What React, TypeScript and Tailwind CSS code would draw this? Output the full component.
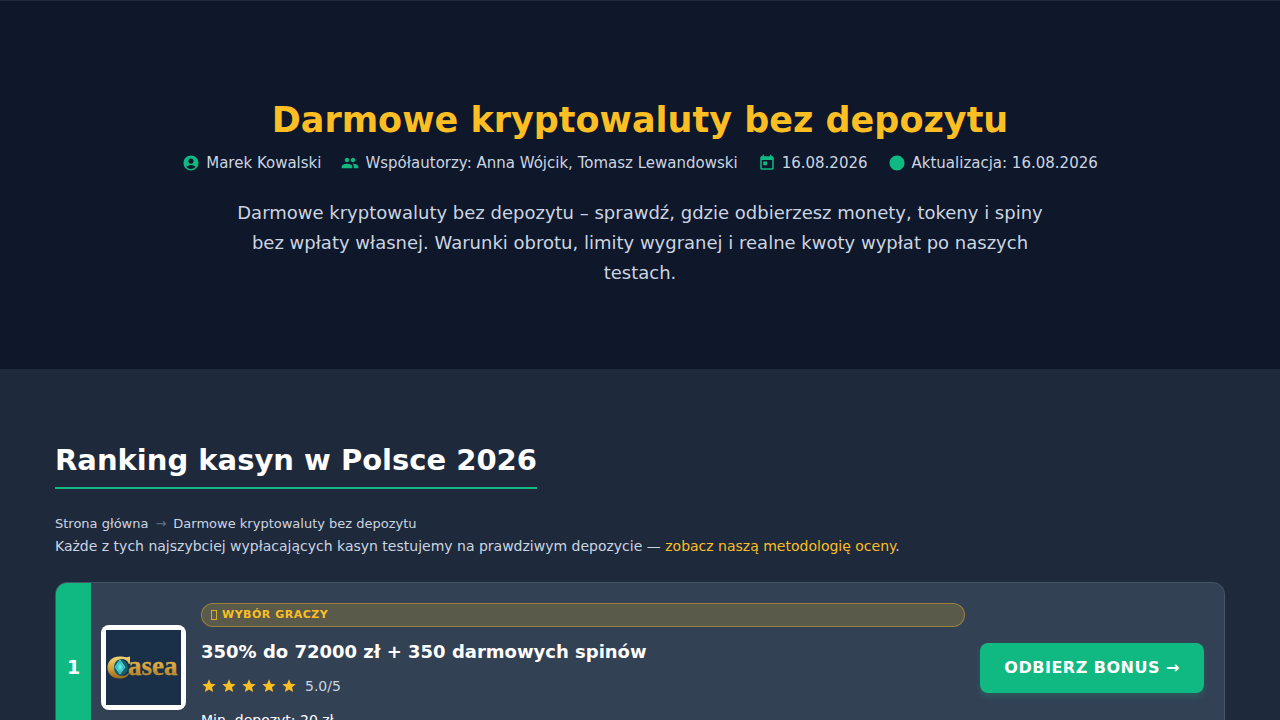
import type { ReactNode } from 'react';
import { MdAccountCircle, MdCircle, MdPeople, MdStar, MdToday } from 'react-icons/md';

interface MetaItemProps {
  icon: ReactNode;
  children: ReactNode;
}

function MetaItem({ icon, children }: MetaItemProps) {
  return (
    <span className="inline-flex items-center gap-[6px]">
      <span className="text-lg text-[#10b981]">{icon}</span>
      {children}
    </span>
  );
}

function Hero() {
  return (
    <header className="border-y border-[#1e293b] bg-[#0f172a] px-4 pt-[90px] pb-20 text-center">
      <h1 className="text-[35px] leading-[58px] font-bold text-[#fbbf24]">
        Darmowe kryptowaluty bez depozytu
      </h1>
      <div className="mt-[2px] flex flex-wrap justify-center gap-x-5 text-[15px] leading-6">
        <MetaItem icon={<MdAccountCircle />}>Marek Kowalski</MetaItem>
        <MetaItem icon={<MdPeople />}>Współautorzy: Anna Wójcik, Tomasz Lewandowski</MetaItem>
        <MetaItem icon={<MdToday />}>16.08.2026</MetaItem>
        <MetaItem icon={<MdCircle />}>Aktualizacja: 16.08.2026</MetaItem>
      </div>
      <p className="mx-auto mt-[23px] mb-px max-w-[820px] text-lg leading-[30px]">
        Darmowe kryptowaluty bez depozytu – sprawdź, gdzie odbierzesz monety, tokeny i spiny bez
        wpłaty własnej. Warunki obrotu, limity wygranej i realne kwoty wypłat po naszych testach.
      </p>
    </header>
  );
}

function CaseaLogo() {
  return (
    <svg viewBox="0 0 75 75" className="block w-full" role="img" aria-label="Casea">
      <defs>
        <linearGradient id="gold" x1="0" y1="0" x2="0" y2="1">
          <stop offset="0" stopColor="#f3d573" />
          <stop offset="0.5" stopColor="#d9a63f" />
          <stop offset="1" stopColor="#9a681c" />
        </linearGradient>
        <radialGradient id="gem">
          <stop offset="0" stopColor="#7ff5ef" />
          <stop offset="0.6" stopColor="#2cc5c8" />
          <stop offset="1" stopColor="#1a8790" />
        </radialGradient>
      </defs>
      <rect width="75" height="75" fill="#1a3048" />
      <circle cx="13.5" cy="37.5" r="8.5" fill="#14606c" />
      <path
        d="M24 26.500v7.500l-1.500-.5c-1-3-3.500-4.500-6.500-4.500-5 0-8 3.500-8 8.500 0 5.500 3.500 8.500 8 8.500 3 0 5-1 7.500-3.500-1.500 4-5 6-10 6-7 0-12-4.500-12-11 0-6.500 5-11 12-11 4 0 7 1.500 10.500 0z"
        fill="url(#gold)"
      />
      <path d="m14 30 5 7-5 7-5-7z" fill="url(#gem)" stroke="#83eae4" strokeWidth="0.7" />
      <text
        x="22"
        y="45"
        fill="url(#gold)"
        stroke="#d8a33f"
        strokeWidth="0.3"
        className="font-['Liberation_Serif',serif] text-[27px] font-bold"
      >
        asea
      </text>
    </svg>
  );
}

function CasinoCard() {
  return (
    <article className="mt-6 flex overflow-hidden rounded-xl border border-[#475569] bg-[#334155]">
      <div className="flex w-[35px] shrink-0 items-center justify-center bg-[#10b981] text-[19px] font-bold text-white">
        1
      </div>
      <div className="flex flex-1 items-center gap-[15px] py-5 pr-5 pl-[10px]">
        <div className="w-[85px] shrink-0 rounded-lg bg-white p-[5px]">
          <CaseaLogo />
        </div>
        <div className="flex-1">
          <div className="flex items-center gap-[5px] rounded-full border border-[#fbbf24]/40 bg-[#fbbf24]/20 px-[9px] text-[11px] leading-[22px] font-bold tracking-[0.5px] text-[#fbbf24]">
            <span aria-hidden="true" className="h-[10px] w-[6px] border border-[#fbbf24]/80" />
            WYBÓR GRACZY
          </div>
          <h3 className="mt-[11px] text-lg leading-7 font-bold text-white">
            350% do 72000 zł + 350 darmowych spinów
          </h3>
          <div className="mt-2 flex items-center gap-1 text-base leading-6 text-[#fbbf24]">
            {[1, 2, 3, 4, 5].map((n) => (
              <MdStar key={n} />
            ))}
            <span className="ml-1 text-sm leading-6 text-[#cbd5e1]">5.0/5</span>
          </div>
          <p className="mt-[10px] text-sm leading-6 text-white">Min. depozyt: 20 zł</p>
        </div>
        <a
          href="#bonus"
          className="shrink-0 rounded-lg bg-[#10b981] px-6 py-3 text-base leading-[26px] font-bold tracking-[0.5px] text-white shadow-[0_4px_6px_rgba(16,185,129,0.2)]"
        >
          ODBIERZ BONUS →
        </a>
      </div>
    </article>
  );
}

export default function App() {
  return (
    <div className="min-h-screen bg-[#1e293b] font-['DejaVu_Sans',sans-serif] text-[#cbd5e1]">
      <Hero />
      <main className="mx-auto max-w-[1200px] px-[15px] pt-[67px] pb-10">
        <h2 className="inline-block border-b-2 border-[#10b981] pb-1 text-[29px] leading-[46px] font-bold text-white">
          Ranking kasyn w Polsce 2026
        </h2>
        <nav aria-label="Breadcrumb" className="mt-[25px] text-[13px] leading-5">
          <a href="#home">Strona główna</a>
          <span className="mx-[7px] text-[#64748b]">→</span>
          <span>Darmowe kryptowaluty bez depozytu</span>
        </nav>
        <p className="text-sm leading-6">
          Każde z tych najszybciej wypłacających kasyn testujemy na prawdziwym depozycie —{' '}
          <a href="#metodologia" className="text-[#fbbf24]">
            zobacz naszą metodologię oceny
          </a>
          .
        </p>
        <CasinoCard />
      </main>
    </div>
  );
}
